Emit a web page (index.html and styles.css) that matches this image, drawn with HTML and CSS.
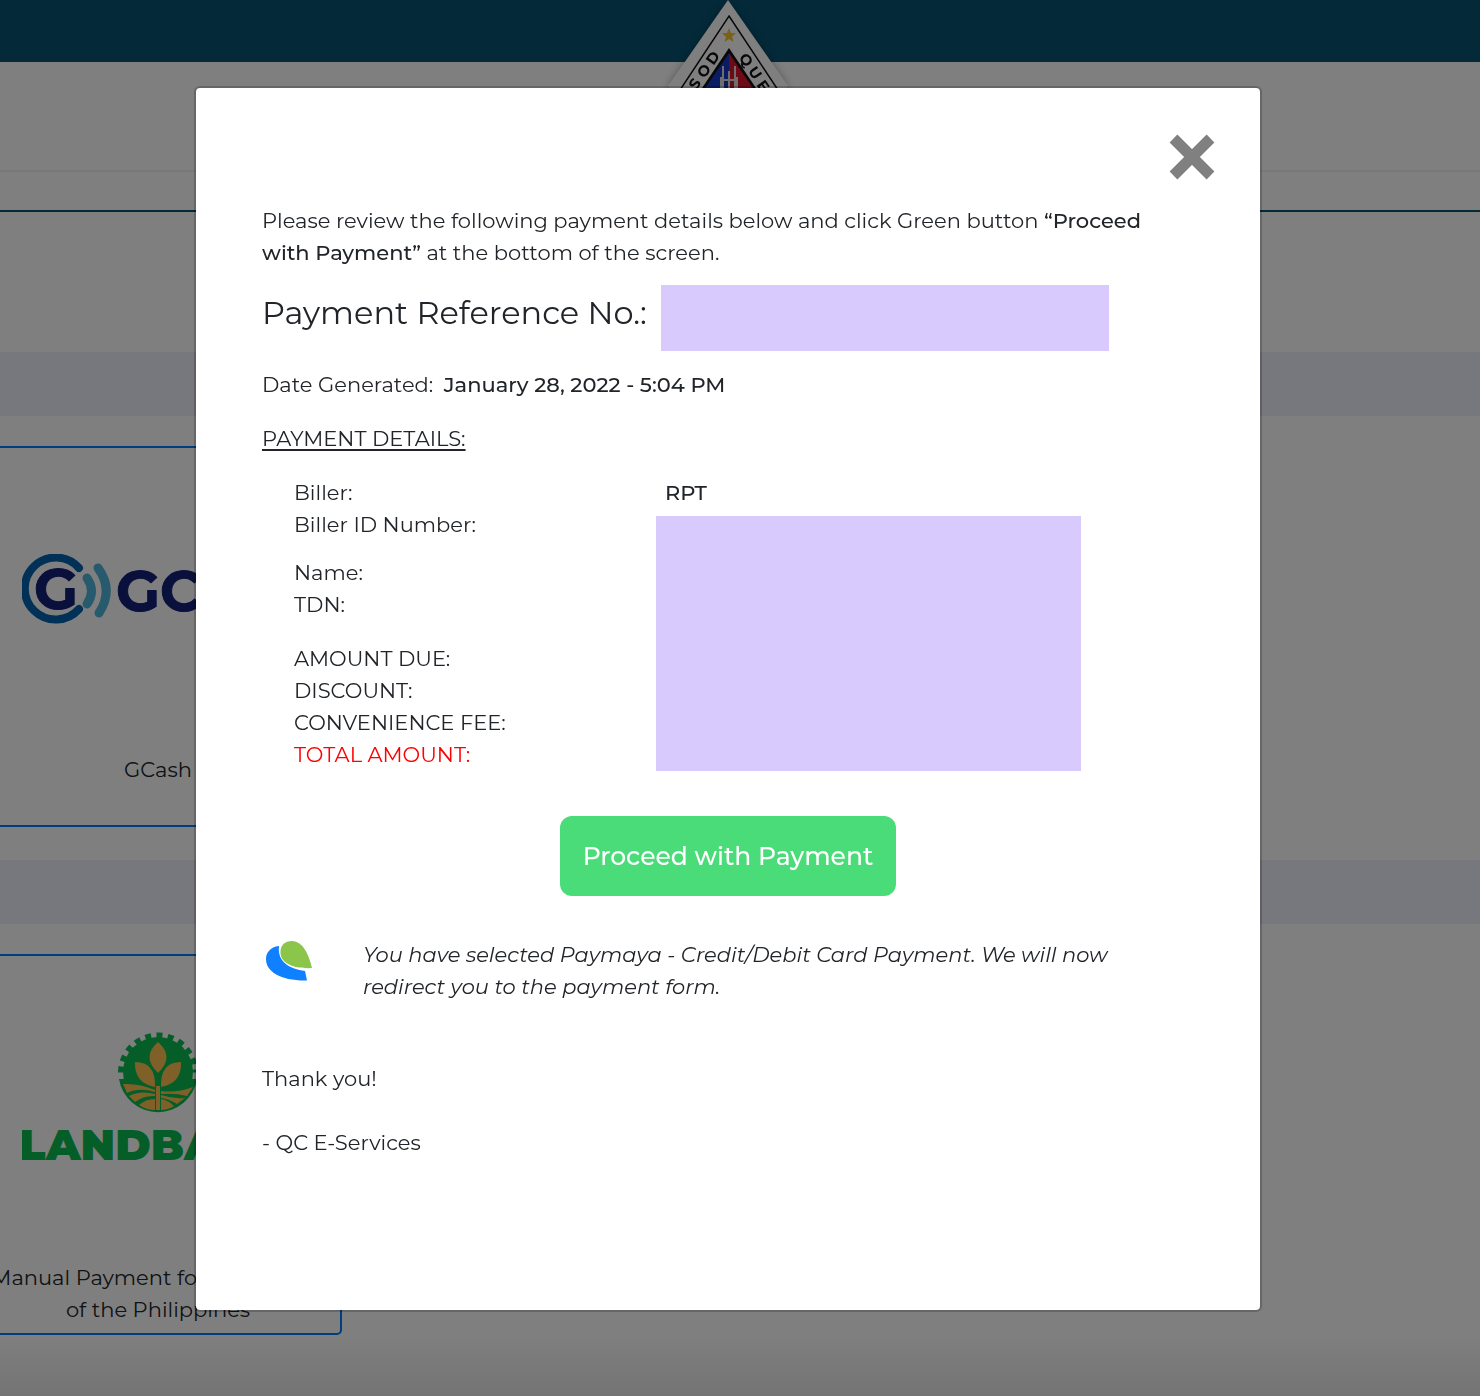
FILE: index.html
```html
<!DOCTYPE html>
<html lang="en">
<head>
    <meta charset="UTF-8">
    <meta name="viewport" content="width=device-width, initial-scale=1.0">
    <title>QC E-Services Payment</title>
    <link rel="stylesheet" href="styles.css">
</head>
<body>
    <div class="page">
        <header class="topbar">
            <svg class="seal" width="124" height="170" viewBox="0 0 124 170" aria-label="Lungsod Quezon">
                <path class="seal-edge" d="M62 0 L122 86 L62 170 L2 86 Z"/>
                <path class="seal-line" d="M63 16 L112 90 L63 160 L14 90 Z"/>
                <path fill="#f2c230" d="M63 28 l2 5 5 .3 -4 3.500 1.500 5.200 -4.500 -3 -4.500 3 1.500 -5.200 -4 -3.500 5 -.3z"/>
                <path fill="#111" d="M63 48 L94 94 L32 94 Z"/>
                <path fill="#1438c8" d="M63 53 L63 94 L35 94 Z"/>
                <path fill="#d8142c" d="M63 53 L63 94 L91 94 Z"/>
                <path class="seal-tower" d="M57 66 V90 M63 71 V90 M69 66 V90 M55 77 V90 M71 77 V90 M57 80 H69"/>
                <g class="seal-text">
                    <text transform="translate(29 84) rotate(-55)" y="5">S</text>
                    <text transform="translate(38 71) rotate(-55)" y="5">O</text>
                    <text transform="translate(47 58) rotate(-55)" y="5">D</text>
                    <text transform="translate(80 60) rotate(55)" y="5">Q</text>
                    <text transform="translate(89 73) rotate(55)" y="5">U</text>
                    <text transform="translate(97 86) rotate(55)" y="5">E</text>
                </g>
            </svg>
        </header>
        <div class="subbar"></div>
        <div class="divider"></div>
        <main>
            <div class="band"></div>
            <section class="option">
                <div class="option-logo">
                    <svg width="272" height="70" viewBox="0 0 272 70" aria-label="GCash">
                        <g fill="none" stroke-linecap="round">
                            <path stroke="#0562ae" stroke-width="8" d="M57 14 A31 31 0 1 0 57 55"/>
                            <path stroke="#50b4dc" stroke-width="9" d="M65 24 Q74 37 65 50"/>
                            <path stroke="#50b4dc" stroke-width="9" d="M76 14 Q92 36 77 59"/>
                        </g>
                        <text class="gcash-word" x="12" y="55">G</text>
                        <text class="gcash-word" x="94" y="57">GCash</text>
                    </svg>
                </div>
                <p>GCash</p>
            </section>
            <div class="band"></div>
            <section class="option">
                <div class="option-logo">
                    <svg width="272" height="130" viewBox="0 0 272 130" aria-label="LANDBANK">
                        <circle cx="136" cy="40" r="35" fill="#0abc50"/>
                        <path fill="none" stroke="#0abc50" stroke-width="6" stroke-dasharray="6 5.300" d="M99 40.500 A37 37 0 0 1 173 40.500"/>
                        <path fill="#0abc50" d="M97 47 H175 A39.500 39.500 0 0 1 97 47 Z"/>
                        <g fill="#ffc050">
                            <path d="M136 10 Q153 25 136 41 Q119 25 136 10Z"/>
                            <path d="M113 30 Q134 30 133 55 Q112 51 113 30Z"/>
                            <path d="M159 30 Q138 30 139 55 Q160 51 159 30Z"/>
                            <path d="M134 54 H138 V78 H134Z"/>
                            <path d="M101 52 Q117 51 133 58 V60 Q117 55 105 61Z"/>
                            <path d="M171 55 Q155 61 139 59 V62 Q154 61 165 64Z"/>
                            <path d="M107 64 Q118 58 133 62 V64 Q122 63 113 70Z"/>
                            <path d="M163 66 Q151 67 139 63 V66 Q147 67 155 72Z"/>
                            <path d="M117 73 Q124 67 133 67 V78 Q124 78 117 73Z"/>
                            <path d="M139 67 Q146 68 152 74 Q146 78 139 78Z"/>
                        </g>
                        <text class="landbank-word" x="-3" y="128">LANDBANK</text>
                    </svg>
                </div>
                <p>Manual Payment for Land Bank of the Philippines</p>
            </section>
        </main>
        <footer class="page-end"></footer>
    </div>

    <div class="backdrop">
        <div class="modal" role="dialog" aria-modal="true" aria-label="Payment details">
            <button class="close" type="button" aria-label="Close">
                <svg width="46" height="46" viewBox="0 0 46 46">
                    <path stroke="#808080" stroke-width="11" d="M4.500 4.500 L41.500 41.500 M41.500 4.500 L4.500 41.500"/>
                </svg>
            </button>
            <p class="intro">Please review the following payment details below and click Green button <strong>“Proceed with Payment”</strong> at the bottom of the screen.</p>
            <div class="reference">
                <h1>Payment Reference No.:</h1>
                <div class="mask mask-reference"></div>
            </div>
            <p class="date">Date Generated: <strong>January 28, 2022 - 5:04 PM</strong></p>
            <h2>PAYMENT DETAILS:</h2>
            <div class="details">
                <div class="labels">
                    <div class="group">
                        <p>Biller:</p>
                        <p>Biller ID Number:</p>
                    </div>
                    <div class="group">
                        <p>Name:</p>
                        <p>TDN:</p>
                    </div>
                    <div class="group amounts">
                        <p>AMOUNT DUE:</p>
                        <p>DISCOUNT:</p>
                        <p>CONVENIENCE FEE:</p>
                        <p class="total">TOTAL AMOUNT:</p>
                    </div>
                </div>
                <div class="values">
                    <p>RPT</p>
                    <div class="mask mask-values"></div>
                </div>
            </div>
            <button class="proceed" type="button">Proceed with Payment</button>
            <div class="notice">
                <svg width="54" height="44" viewBox="0 0 54 44" aria-label="PayMaya">
                    <path fill="#0f80ff" d="M17 7 C8 8 4 14 4 20 C4 33 19 42 45 41.500 L43 32 C28 30 15 23 17 7Z"/>
                    <path fill="#8bc54a" d="M18.500 14 C18 6 23 2 30 2 C41 2 47 16 50 29 C33 30 19 25 18.500 14Z"/>
                </svg>
                <p>You have selected Paymaya - Credit/Debit Card Payment. We will now redirect you to the payment form.</p>
            </div>
            <p class="thanks">Thank you!</p>
            <p class="sign">- QC E-Services</p>
        </div>
    </div>
</body>
</html>
```
FILE: styles.css
```css
* {
    box-sizing: border-box;
}

body {
    margin: 0;
    background: #fff;
    color: #212529;
    font-family: 'Montserrat', 'Inter', sans-serif;
    font-size: 21px;
    line-height: 32px;
    overflow: hidden;
}

p, h1, h2 {
    margin: 0;
}

strong {
    font-weight: 500;
}

/* page behind the modal */
.page {
    min-height: 100vh;
    display: flex;
    flex-direction: column;
}

.topbar {
    height: 62px;
    padding-right: 24px;
    background: #085474;
    display: flex;
    justify-content: center;
    align-items: flex-start;
}

.seal {
    flex: none;
    filter: drop-shadow(0 0 4px rgba(0, 0, 0, 0.3));
}

.seal-edge {
    fill: #fff;
}

.seal-line {
    fill: none;
    stroke: #111;
    stroke-width: 1.5;
}

.seal-tower {
    fill: none;
    stroke: #ddd;
    stroke-width: 2;
}

.seal-text {
    fill: #111;
    font-size: 15px;
    font-weight: 700;
    line-height: 16px;
    text-anchor: middle;
}

.subbar {
    height: 110px;
    border-bottom: 2px solid #f0f0f0;
}

.divider {
    height: 40px;
    border-bottom: 2px solid #085474;
}

main {
    padding-top: 140px;
}

.band {
    height: 64px;
    background: #eef0fa;
}

.option {
    width: 368px;
    margin: 30px 0 33px -26px;
    padding: 0 12px 7px;
    border: 2px solid #007bff;
    border-radius: 5px;
    text-align: center;
}

.option-logo {
    height: 282px;
    margin-bottom: 24px;
    display: flex;
    justify-content: center;
    align-items: center;
}

.option p {
    min-height: 64px;
}

.gcash-word {
    fill: #142078;
    stroke: #142078;
    stroke-width: 1;
    stroke-linejoin: round;
    font-size: 57px;
    font-weight: 700;
}

.landbank-word {
    fill: #0abc50;
    font-size: 43px;
    font-weight: 900;
}

.page-end {
    flex: 1;
    margin-top: -33px;
    background: linear-gradient(#fff, #e8e8e8);
}

/* modal */
.backdrop {
    position: fixed;
    inset: 0;
    padding: 86px 24px 84px 0;
    background: rgba(0, 0, 0, 0.5);
    overflow: hidden;
}

.modal {
    max-width: 1068px;
    margin: 0 auto;
    padding: 46px 66px 151px;
    display: flex;
    flex-direction: column;
    background: #fff;
    background-clip: padding-box;
    border: 2px solid rgba(0, 0, 0, 0.2);
    border-radius: 6px;
}

button {
    border: none;
    font-family: inherit;
    cursor: pointer;
}

.close {
    align-self: flex-end;
    height: 46px;
    margin-right: -21px;
    padding: 0;
    background: none;
}

.close svg,
.notice svg {
    display: block;
}

.intro {
    margin: 25px 0 16px;
}

.reference {
    display: flex;
    align-items: flex-start;
    gap: 14px;
}

h1 {
    font-size: 32px;
    font-weight: 400;
    line-height: 56px;
    white-space: nowrap;
}

.mask {
    background: #d8cafc;
}

.mask-reference {
    width: 448px;
    height: 66px;
}

.date {
    margin: 18px 0 22px;
}

.date strong {
    margin-left: 5px;
}

h2 {
    font-size: 21px;
    font-weight: 400;
    text-decoration: underline;
    text-underline-offset: 3px;
}

.details {
    display: flex;
    margin: 22px 0 45px 32px;
}

.labels {
    width: 362px;
}

.group {
    margin-bottom: 16px;
}

.amounts {
    margin: 22px 0 0;
}

.total {
    color: #f00;
}

.values {
    width: 425px;
    display: flex;
    flex-direction: column;
}

.values p {
    padding-left: 9px;
    font-weight: 500;
}

.mask-values {
    flex: 1;
    margin-top: 7px;
}

.proceed {
    align-self: center;
    width: 336px;
    height: 80px;
    padding: 0;
    background: #4adc79;
    border-radius: 12px;
    color: #fff;
    font-size: 25px;
    font-weight: 500;
}

.proceed:hover {
    background: #3ccb6a;
}

.notice {
    display: flex;
    gap: 47px;
    margin-top: 43px;
    font-style: italic;
}

.notice svg {
    flex: none;
}

.thanks {
    margin-top: 60px;
}

.sign {
    margin-top: 32px;
}
```
